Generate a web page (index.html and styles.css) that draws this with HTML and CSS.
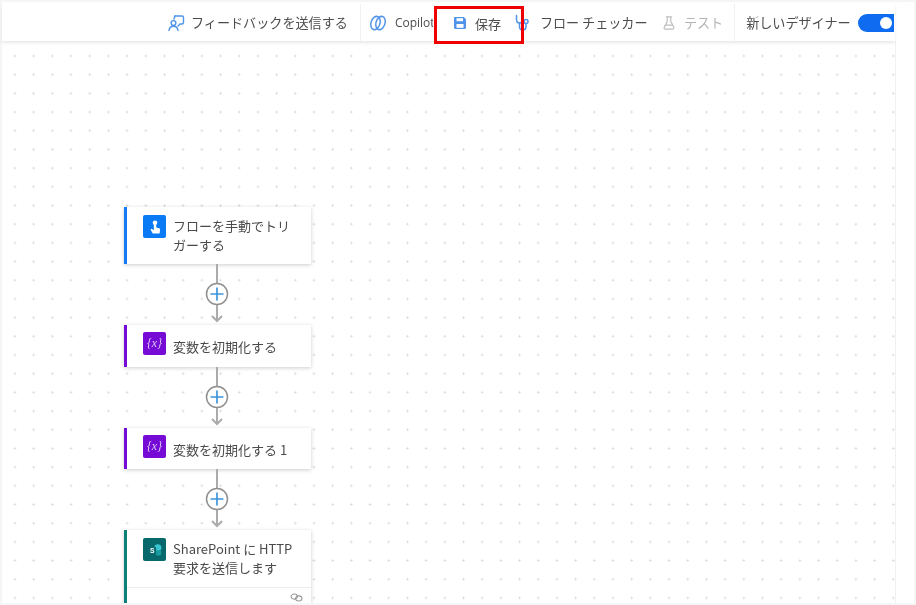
FILE: index.html
```html
<!DOCTYPE html>
<html lang="ja">
<head>
<meta charset="utf-8">
<title>フロー デザイナー</title>
<link rel="stylesheet" href="styles.css">
</head>
<body>
<div class="app">
  <header class="toolbar">
    <button class="tool">
      <svg class="ico" viewBox="0 0 18 18" fill="none" stroke="#4f94e8" stroke-width="1.4" stroke-linejoin="round" stroke-linecap="round"><path d="M8 2h7a1.5 1.5 0 0 1 1.5 1.5v5A1.5 1.5 0 0 1 15 10h-2l-2 2"/><path d="M8 2 7 5"/><circle cx="6.5" cy="9" r="2.4"/><path d="M2 16.5c.3-2.700 2-4.200 4.500-4.200s4.200 1.500 4.500 4.200"/></svg>
      <span>フィードバックを送信する</span>
    </button>
    <i class="sep sep-a"></i>
    <button class="tool tool-copilot">
      <svg class="ico" viewBox="0 0 18 18" fill="none" stroke="#4f94e8" stroke-width="1.5"><ellipse cx="6.500" cy="9" rx="4.500" ry="6.800" transform="rotate(18 6.500 9)"/><ellipse cx="11.500" cy="9" rx="4.500" ry="6.800" transform="rotate(18 11.500 9)"/></svg>
      <span class="clip">Copilot</span>
    </button>
    <button class="tool tool-save">
      <svg class="ico-s" viewBox="0 0 14 14"><path d="M1 2.200C1 1.500 1.500 1 2.200 1h8.600L13 3.200v8.600c0 .7-.5 1.200-1.200 1.200H2.200C1.500 13 1 12.500 1 11.800z" fill="#4f94e8"/><rect x="3.500" y="2.200" width="6.500" height="3" fill="#fff"/><rect x="3.500" y="8" width="7" height="3.800" fill="#fff"/></svg>
      <span>保存</span>
    </button>
    <button class="tool tool-check">
      <svg class="ico" viewBox="0 0 18 18" fill="none" stroke="#4f94e8" stroke-width="1.5" stroke-linecap="round"><path d="M2.500 1.500v4c0 2.200 1.300 3.500 3 3.500s3-1.300 3-3.500v-4"/><path d="M5.500 9v3.500c0 2 1.300 3.500 3.200 3.500s3.300-1.500 3.300-3.500V9.500"/><circle cx="12" cy="7.500" r="2"/></svg>
      <span>フロー チェッカー</span>
    </button>
    <button class="tool tool-test">
      <svg class="ico-s" viewBox="0 0 14 16" fill="none" stroke="#bdbdbd" stroke-width="1.300" stroke-linejoin="round" stroke-linecap="round"><path d="M4 1h6M5 1v5L1.500 13c-.4.900.1 2 1.200 2h8.600c1.100 0 1.600-1.100 1.200-2L9 6V1"/><path d="M3.500 10.500h7"/></svg>
      <span>テスト</span>
    </button>
    <i class="sep sep-b"></i>
    <span class="tool-label">新しいデザイナー</span>
    <span class="toggle"><i class="knob"></i></span>
  </header>

  <div class="body">
    <main class="canvas">
      <section class="flow">
        <article class="card card-blue">
          <div class="card-head">
            <span class="badge badge-blue">
              <svg viewBox="0 0 16 16" width="16" height="16" fill="#fff"><circle cx="8" cy="3.800" r="2.300"/><path d="M6.800 5.500h2.400v3l3 .8c.6.200 1 .7.900 1.400l-.5 3.800H5.800L3.500 10.400l1-.7 2.300 1.600z"/></svg>
            </span>
            <span class="title">フローを手動でトリガーする</span>
          </div>
        </article>
        <div class="link">
          <svg viewBox="0 0 30 61" width="30" height="61" fill="none"><path d="M15 0v57" stroke="#ababab" stroke-width="2"/><path d="M10 52l5 5 5-5" stroke="#ababab" stroke-width="2"/><circle cx="15" cy="30" r="10.500" fill="#fff" stroke="#8f8f8f" stroke-width="1.500"/><path d="M8.500 30h13M15 23.500v13" stroke="#3d94dc" stroke-width="1.700"/></svg>
        </div>
        <article class="card card-purple card-single">
          <div class="card-head">
            <span class="badge badge-purple">{x}</span>
            <span class="title">変数を初期化する</span>
          </div>
        </article>
        <div class="link">
          <svg viewBox="0 0 30 61" width="30" height="61" fill="none"><path d="M15 0v57" stroke="#ababab" stroke-width="2"/><path d="M10 52l5 5 5-5" stroke="#ababab" stroke-width="2"/><circle cx="15" cy="30" r="10.500" fill="#fff" stroke="#8f8f8f" stroke-width="1.500"/><path d="M8.500 30h13M15 23.500v13" stroke="#3d94dc" stroke-width="1.700"/></svg>
        </div>
        <article class="card card-purple card-single">
          <div class="card-head">
            <span class="badge badge-purple">{x}</span>
            <span class="title">変数を初期化する 1</span>
          </div>
        </article>
        <div class="link">
          <svg viewBox="0 0 30 61" width="30" height="61" fill="none"><path d="M15 0v57" stroke="#ababab" stroke-width="2"/><path d="M10 52l5 5 5-5" stroke="#ababab" stroke-width="2"/><circle cx="15" cy="30" r="10.500" fill="#fff" stroke="#8f8f8f" stroke-width="1.500"/><path d="M8.500 30h13M15 23.500v13" stroke="#3d94dc" stroke-width="1.700"/></svg>
        </div>
        <article class="card card-teal">
          <div class="card-head">
            <span class="badge badge-teal">
              <svg viewBox="0 0 16 16" width="18" height="18"><circle cx="10.500" cy="6" r="3.200" fill="#37c6d0"/><circle cx="11" cy="10.500" r="2.600" fill="#1a9ba1"/><rect x="2" y="5" width="7" height="7" rx="1" fill="#0b6a6e"/><text x="5.500" y="10.500" class="sp-letter">S</text></svg>
            </span>
            <span class="title">SharePoint に HTTP 要求を送信します</span>
          </div>
          <div class="card-foot">
            <svg viewBox="0 0 14 10" width="13" height="9" fill="none" stroke="#9a9a9a" stroke-width="1.200"><ellipse cx="4.500" cy="4" rx="3.500" ry="2.800"/><ellipse cx="9.500" cy="6" rx="3.500" ry="2.800"/></svg>
          </div>
        </article>
      </section>
    </main>
    <aside class="rail"></aside>
  </div>
</div>
</body>
</html>
```
FILE: styles.css
```css
* { box-sizing: border-box; }
html, body { margin: 0; height: 100%; }
body {
  width: 916px;
  height: 605px;
  overflow: hidden;
  background: #f5f5f5;
  padding: 2px 2px 2px 2px;
  font-family: "Noto Sans CJK JP", "Open Sans", sans-serif;
  color: #4c4c4c;
}
.app {
  width: 912px;
  height: 601px;
  background: #fff;
  padding-top: 2px;
  display: flex;
  flex-direction: column;
  filter: blur(0.45px);
}
.toolbar {
  position: relative;
  z-index: 2;
  flex: none;
  width: 893px;
  height: 37px;
  background: #fff;
  box-shadow: 0 2px 3px rgba(0,0,0,.09);
  display: flex;
  align-items: center;
  padding-left: 165px;
  font-size: 13.1px;
}
.tool {
  display: flex;
  align-items: center;
  gap: 6px;
  padding: 0;
  border: 0;
  background: none;
  font: inherit;
  color: inherit;
  white-space: nowrap;
}
.ico { width: 18px; height: 18px; flex: none; }
.ico-s { width: 14px; height: 14px; flex: none; }
.sep { width: 1px; height: 37px; background: #f1f1f1; flex: none; }
.sep-a { margin: 0 8px 0 12px; }
.sep-b { margin: 0 11px 0 11px; }
.tool-copilot { width: 65px; gap: 8px; flex: none; }
.clip { width: 38px; overflow: hidden; font-family: "Open Sans", sans-serif; font-size: 12px; }
.tool-save {
  position: relative;
  z-index: 3;
  flex: none;
  width: 90px;
  height: 38px;
  margin: 4px -10px 0 0;
  border: 3px solid #f00000;
  padding: 0 0 3px 16px;
  gap: 8px;
  font-size: 13px;
}
.tool-check { gap: 8px; margin-right: 15px; width: 133px; flex: none; }
.tool-test { gap: 8px; color: #b5b5b5; flex: none; }
.tool-label { white-space: nowrap; }
.toggle {
  flex: none;
  width: 36px;
  height: 18px;
  margin-left: 7px;
  border-radius: 9px 0 0 9px;
  background: #0f6cf0;
  display: flex;
  align-items: center;
  justify-content: flex-end;
  padding-right: 2px;
}
.knob { width: 12px; height: 12px; border-radius: 50%; background: #fff; }

.body { flex: 1; min-height: 0; display: flex; width: 912px; }
.canvas {
  flex: none;
  width: 893px;
  overflow: hidden;
  background-color: #fff;
  background-image: radial-gradient(circle, #d9d9d9 0.9px, transparent 1.2px);
  background-size: 18.7px 18.7px;
  background-position: 3.650px 5.650px;
  padding: 166px 0 0 122px;
}
.rail { flex: 1; background: #fff; border-left: 1px solid #f1f1f1; }

.flow { width: 187px; display: flex; flex-direction: column; align-items: center; }
.card {
  flex: none;
  width: 187px;
  background: #fff;
  border-left: 3px solid;
  box-shadow: 0 1px 4px rgba(0,0,0,.2);
}
.card-blue { border-left-color: #1479f5; }
.card-purple { border-left-color: #770bd6; }
.card-teal { border-left-color: #0b7f78; }
.card-single { height: 41.5px; }
.card-head { display: flex; gap: 7px; padding: 8px 17px 10px 16px; }
.card-single .card-head { padding-top: 7px; }
.card-single .title { padding-top: 5px; }
.badge {
  flex: none;
  width: 23px;
  height: 23px;
  border-radius: 2px;
  display: flex;
  align-items: center;
  justify-content: center;
  color: #fff;
}
.badge-blue { background: #0a7af5; }
.badge-purple { background: #770bd6; font-family: "Liberation Serif", serif; font-style: italic; font-size: 12px; color: #dcc4f5; }
.badge-teal { background: #07696c; }
.sp-letter { font-family: "Liberation Sans", sans-serif; font-size: 6px; fill: #fff; text-anchor: middle; font-weight: 700; }
.title { padding-top: 1px; font-size: 13px; line-height: 19px; color: #4a4a4a; }
.link { flex: none; width: 30px; height: 61px; margin-right: 1px; }
.link svg { display: block; }
.card-foot {
  height: 22px;
  border-top: 1px solid #ececec;
  display: flex;
  justify-content: flex-end;
  padding: 5px 8px 0 0;
}
```
